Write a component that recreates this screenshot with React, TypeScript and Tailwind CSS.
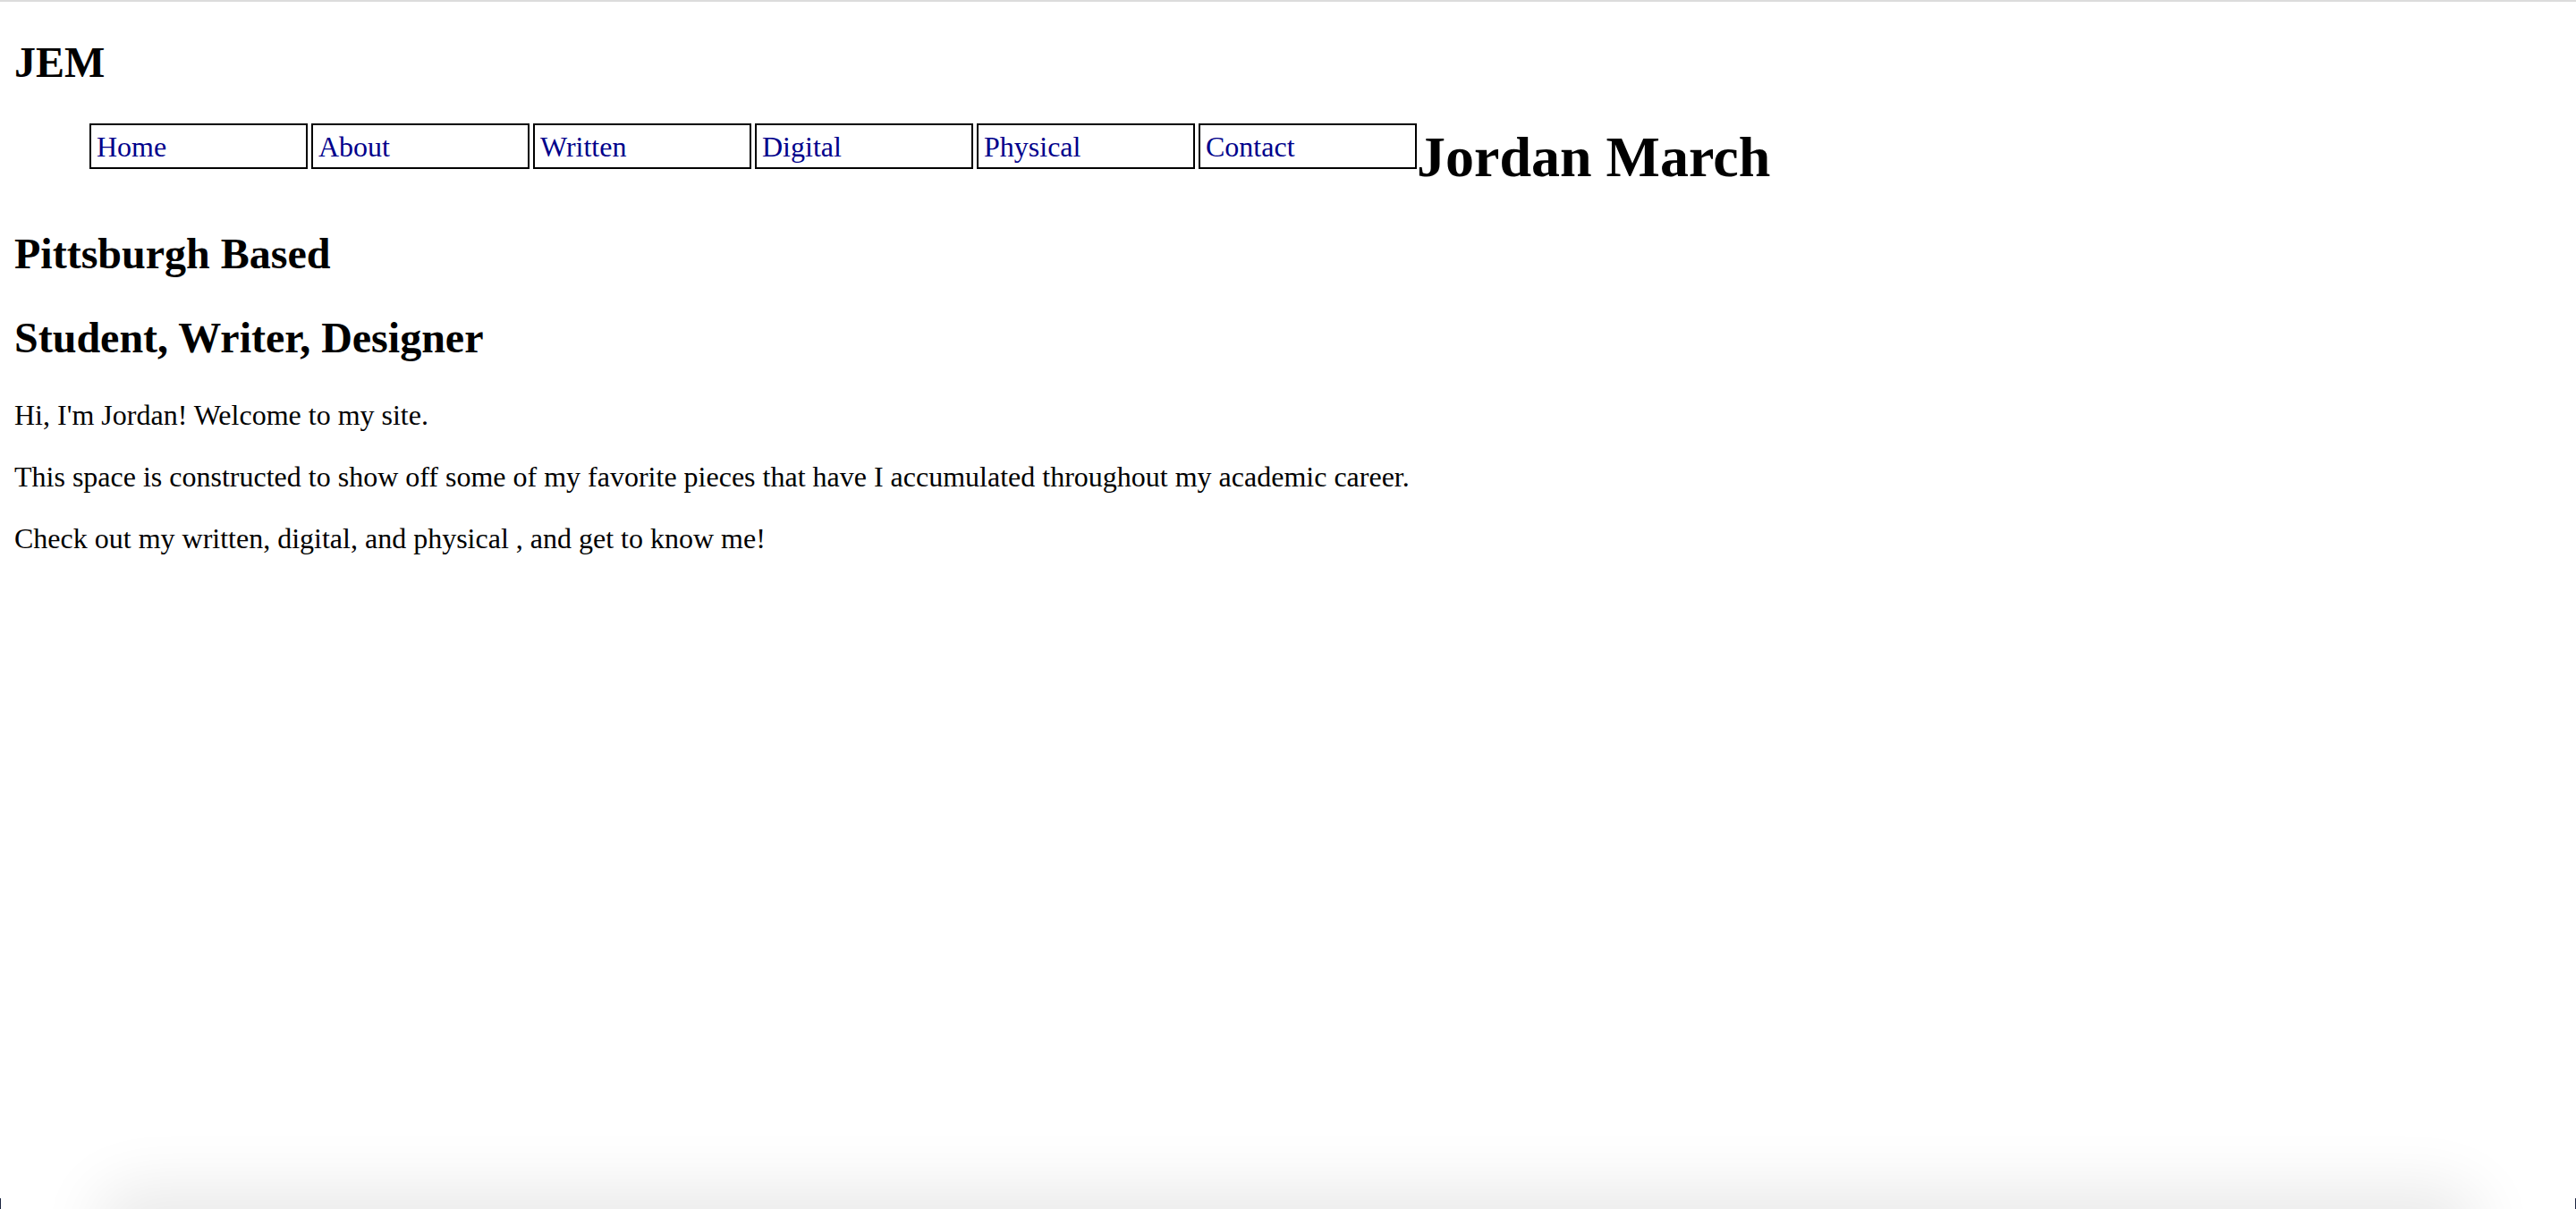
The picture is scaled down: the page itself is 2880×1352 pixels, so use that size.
const NAV_ITEMS = ['Home', 'About', 'Written', 'Digital', 'Physical', 'Contact'];

const PARAGRAPHS = [
  "Hi, I'm Jordan! Welcome to my site.",
  'This space is constructed to show off some of my favorite pieces that have I accumulated throughout my academic career.',
  'Check out my written, digital, and physical , and get to know me!',
];

export default function App() {
  return (
    <div className="relative h-screen overflow-hidden bg-white text-black font-['Liberation_Serif','Times_New_Roman',serif]">
      <div className="h-[2px] bg-[#dcdcdc]" />

      <div className="px-[16px]">
        <h2 className="mt-[40px] text-[48px] font-bold leading-[55px]">JEM</h2>

        <nav className="mt-[41px] flex items-start pl-[84px]">
          <ul className="flex gap-[4px]">
            {NAV_ITEMS.map((item) => (
              <li
                key={item}
                className="h-[51px] w-[244px] border-2 border-black pl-[6px] pt-[6px] text-[32px] leading-[37px]"
              >
                <a href="#" className="text-[#00008b]">
                  {item}
                </a>
              </li>
            ))}
          </ul>
          <h1 className="mt-[1px] text-[64px] font-bold leading-[74px]">Jordan March</h1>
        </nav>

        <h2 className="mt-[43px] text-[48px] font-bold leading-[55px]">Pittsburgh Based</h2>
        <h2 className="mt-[39px] text-[48px] font-bold leading-[55px]">Student, Writer, Designer</h2>

        <div className="mt-[41px] flex flex-col gap-[32px]">
          {PARAGRAPHS.map((p) => (
            <p key={p} className="text-[32px] leading-[37px]">
              {p}
            </p>
          ))}
        </div>
      </div>

      {/* window shadow creeping in at the bottom edge */}
      <div className="absolute bottom-[-40px] left-[130px] right-[130px] h-[40px] rounded-[40px] bg-[#e4e4e4] shadow-[0_0_70px_24px_rgba(0,0,0,0.09)]" />
      <div className="absolute bottom-0 left-0 h-[12px] w-[1px] bg-[#1c2541]" />
      <div className="absolute bottom-0 right-0 h-[12px] w-[1px] bg-[#1c2541]" />
    </div>
  );
}
